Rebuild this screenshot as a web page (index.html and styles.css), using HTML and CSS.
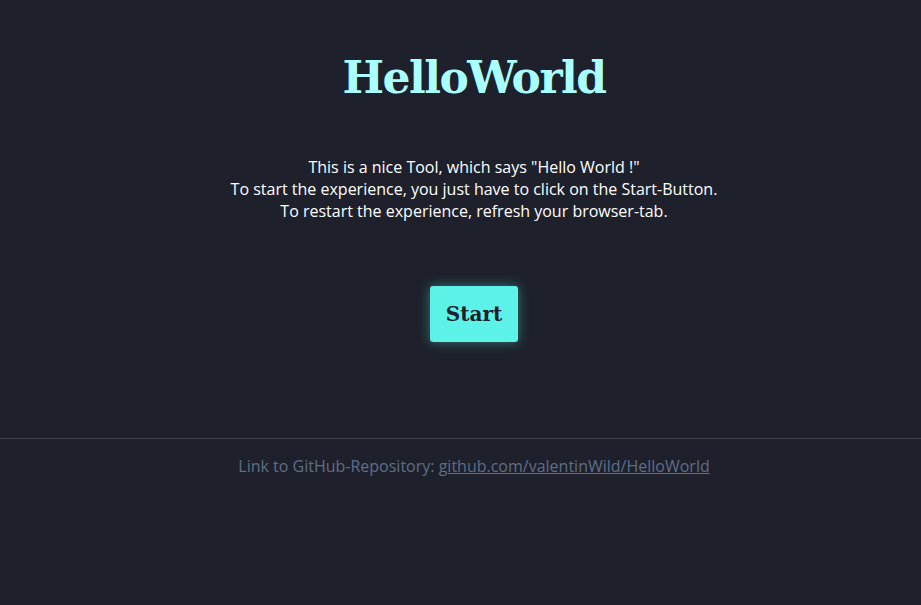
FILE: index.html
```html
<!DOCTYPE html>
<html lang="en">
<head>
<meta charset="utf-8">
<title>HelloWorld</title>
<link rel="stylesheet" href="styles.css">
</head>
<body>
<main class="main">
  <h1 class="title">HelloWorld</h1>
  <p class="intro">This is a nice Tool, which says "Hello World !"<br>To start the experience, you just have to click on the Start-Button.<br>To restart the experience, refresh your browser-tab.</p>
  <button class="start">Start</button>
</main>
<footer class="footer">
  <p class="footer-text">Link to GitHub-Repository: <a class="footer-link" href="#">github.com/valentinWild/HelloWorld</a></p>
</footer>
</body>
</html>
```
FILE: styles.css
```css
html, body {
  margin: 0;
  padding: 0;
  background: #1e212b;
}
body {
  font-family: "Open Sans", "Noto Sans", sans-serif;
  font-size: 16px;
  color: #ffffff;
  height: 605px;
}
.main {
  display: flex;
  flex-direction: column;
  align-items: center;
  padding-top: 49px;
  padding-left: 27px;
}
.title {
  margin: 0;
  font-family: "DejaVu Serif", "Liberation Serif", serif;
  font-weight: bold;
  font-size: 44px;
  line-height: 58px;
  color: #aaffff;
  letter-spacing: -1.5px;
}
.intro {
  margin: 49px 0 0;
  text-align: center;
  line-height: 22px;
}
.start {
  margin-top: 64px;
  width: 88px;
  height: 56px;
  border: none;
  border-radius: 3px;
  background: #5cf2e8;
  color: #1e212b;
  font-family: "DejaVu Serif", serif;
  font-weight: bold;
  font-size: 20px;
  box-shadow: 0 0 12px rgba(92, 242, 232, 0.4);
  padding: 0;
}
.footer {
  margin-top: 96px;
  border-top: 1px solid #3a3d4a;
  text-align: center;
}
.footer-text {
  margin: 16px 0 0;
  padding-left: 27px;
  line-height: 22px;
  color: #5f6e88;
}
.footer-link {
  color: #5f6e88;
}
```
